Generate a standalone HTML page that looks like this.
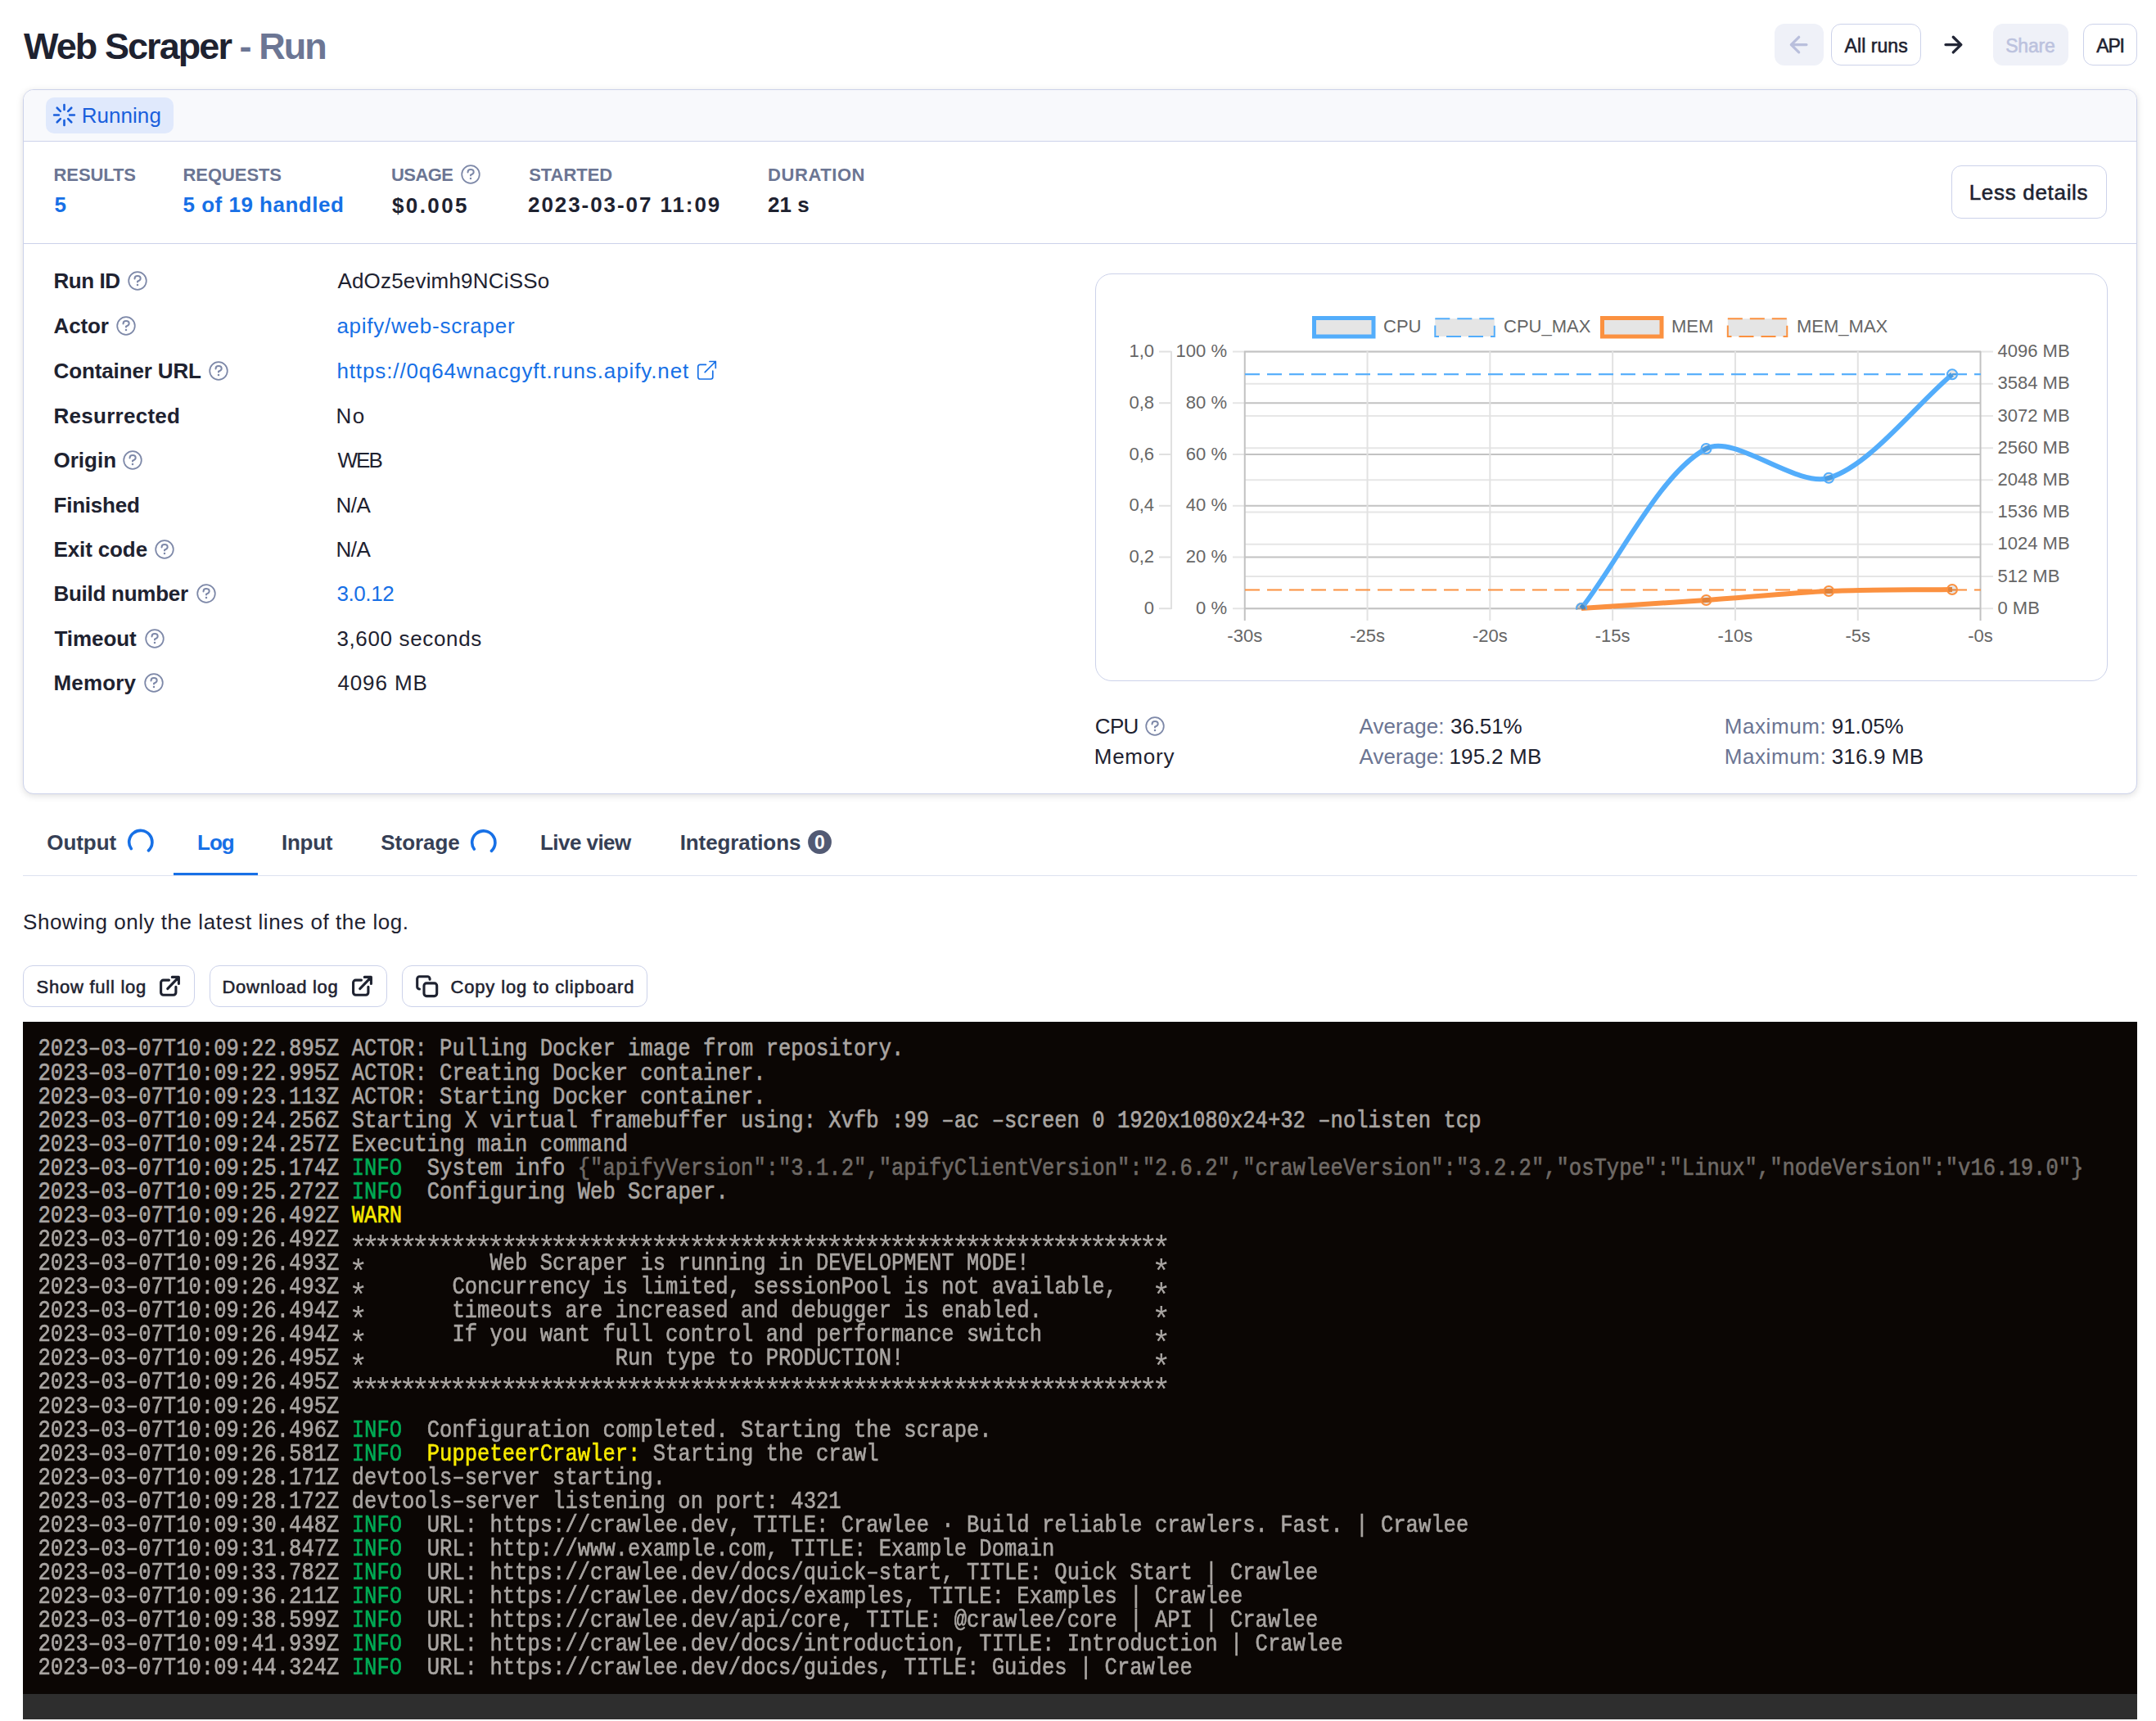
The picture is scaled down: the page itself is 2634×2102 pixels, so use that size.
<!DOCTYPE html><html><head><meta charset="utf-8"><style>html,body{margin:0;padding:0;background:#fff;width:2634px;height:2102px;overflow:hidden;position:relative} .k{display:inline-block;width:15.336px;text-align:center;transform:translateY(11.2px) scale(1.5,1.35);-webkit-text-stroke:0} .lg{-webkit-text-stroke:0.35px currentColor}</style></head><body><div style="position:absolute;left:29px;top:31.27px;font-family:'Liberation Sans', sans-serif;font-size:45px;font-weight:700;color:#1e2230;letter-spacing:-1.938px;line-height:normal;white-space:pre;">Web Scraper <span style="color:#6c7694">- Run</span></div>
<div style="position:absolute;left:2168px;top:29px;width:60px;height:51px;box-sizing:border-box;background:#eff1f8;border-radius:12px"></div>
<svg style="position:absolute;left:0;top:0" width="2634" height="100"><path d="M2207,54.6 H2188.5 M2197.7,45.3 L2188.3,54.6 L2197.7,63.9" fill="none" stroke="#b9bfdc" stroke-width="3.2" stroke-linecap="round" stroke-linejoin="round"/><path d="M2377,54.6 H2395.8 M2386.3,45.3 L2395.8,54.6 L2386.3,63.9" fill="none" stroke="#222636" stroke-width="3.4" stroke-linecap="round" stroke-linejoin="round"/></svg>
<div style="position:absolute;left:2237px;top:29px;width:110px;height:51px;box-sizing:border-box;border:1px solid #ccd2ea;border-radius:12px;background:#fff"></div>
<div style="position:absolute;left:2253.6px;top:43.19px;font-family:'Liberation Sans', sans-serif;font-size:23px;font-weight:400;color:#1e2230;letter-spacing:0.057px;line-height:normal;white-space:pre;-webkit-text-stroke:0.55px currentColor">All runs</div>
<div style="position:absolute;left:2435px;top:29px;width:92px;height:51px;box-sizing:border-box;background:#eff1f8;border-radius:12px"></div>
<div style="position:absolute;left:2450.2px;top:43.19px;font-family:'Liberation Sans', sans-serif;font-size:23px;font-weight:400;color:#bcc2de;letter-spacing:-0.175px;line-height:normal;white-space:pre;-webkit-text-stroke:0.55px currentColor">Share</div>
<div style="position:absolute;left:2545px;top:29px;width:66px;height:51px;box-sizing:border-box;border:1px solid #ccd2ea;border-radius:12px;background:#fff"></div>
<div style="position:absolute;left:2561.2px;top:43.19px;font-family:'Liberation Sans', sans-serif;font-size:23px;font-weight:400;color:#1e2230;letter-spacing:-1.15px;line-height:normal;white-space:pre;-webkit-text-stroke:0.55px currentColor">API</div>
<div style="position:absolute;left:28px;top:109px;width:2583px;height:861px;box-sizing:border-box;border:1px solid #ccd2ea;border-radius:13px;background:#fff;box-shadow:0 2px 8px rgba(0,0,0,0.13)"></div>
<div style="position:absolute;left:29px;top:110px;width:2581px;height:62px;box-sizing:border-box;background:#f8f9fc;border-radius:12px 12px 0 0"></div>
<div style="position:absolute;left:29px;top:172px;width:2581px;height:1px;box-sizing:border-box;background:#ccd2ea"></div>
<div style="position:absolute;left:56px;top:119px;width:156px;height:44px;box-sizing:border-box;background:#e0e9fc;border-radius:10px"></div>
<svg style="position:absolute;left:0;top:0" width="300" height="200"><path d="M85.10,140.50 L90.90,140.50 M83.17,145.17 L87.27,149.27 M78.50,147.10 L78.50,152.90 M73.83,145.17 L69.73,149.27 M71.90,140.50 L66.10,140.50 M73.83,135.83 L69.73,131.73 M78.50,133.90 L78.50,128.10 M83.17,135.83 L87.27,131.73" stroke="#1a5fdc" stroke-width="2.6" stroke-linecap="round"/></svg>
<div style="position:absolute;left:99.7px;top:126.47px;font-family:'Liberation Sans', sans-serif;font-size:26px;font-weight:400;color:#1a5fdc;letter-spacing:0.05px;line-height:normal;white-space:pre;">Running</div>
<div style="position:absolute;left:65.5px;top:201.09px;font-family:'Liberation Sans', sans-serif;font-size:22px;font-weight:700;color:#6b7593;letter-spacing:-0.083px;line-height:normal;white-space:pre;">RESULTS</div>
<div style="position:absolute;left:66.5px;top:235.47px;font-family:'Liberation Sans', sans-serif;font-size:26px;font-weight:700;color:#1770e6;letter-spacing:0px;line-height:normal;white-space:pre;">5</div>
<div style="position:absolute;left:223.5px;top:201.09px;font-family:'Liberation Sans', sans-serif;font-size:22px;font-weight:700;color:#6b7593;letter-spacing:-0.071px;line-height:normal;white-space:pre;">REQUESTS</div>
<div style="position:absolute;left:223.5px;top:235.47px;font-family:'Liberation Sans', sans-serif;font-size:26px;font-weight:700;color:#1770e6;letter-spacing:0.5px;line-height:normal;white-space:pre;">5 of 19 handled</div>
<div style="position:absolute;left:478px;top:201.09px;font-family:'Liberation Sans', sans-serif;font-size:22px;font-weight:700;color:#6b7593;letter-spacing:-0.575px;line-height:normal;white-space:pre;">USAGE</div>
<svg style="position:absolute;left:561.5px;top:199.5px" width="26" height="26" viewBox="-13 -13 26 26"><circle cx="0" cy="0" r="10.8" fill="none" stroke="#7d88a8" stroke-width="1.75"/><path d="M-3.5,-2.6 C-3.5,-4.8 -1.9,-5.9 0,-5.9 C2.1,-5.9 3.7,-4.6 3.7,-2.7 C3.7,-0.9 2.1,-0.1 0,0.7 L0,1.5" fill="none" stroke="#7d88a8" stroke-width="2" stroke-linecap="round" stroke-linejoin="round"/><circle cx="0" cy="5.1" r="1.25" fill="#7d88a8"/></svg>
<div style="position:absolute;left:479px;top:236.47px;font-family:'Liberation Sans', sans-serif;font-size:26px;font-weight:700;color:#1e2230;letter-spacing:2.4px;line-height:normal;white-space:pre;">$0.005</div>
<div style="position:absolute;left:646.2px;top:201.09px;font-family:'Liberation Sans', sans-serif;font-size:22px;font-weight:700;color:#6b7593;letter-spacing:-0.05px;line-height:normal;white-space:pre;">STARTED</div>
<div style="position:absolute;left:645px;top:235.47px;font-family:'Liberation Sans', sans-serif;font-size:26px;font-weight:700;color:#1e2230;letter-spacing:1.933px;line-height:normal;white-space:pre;">2023-03-07 11:09</div>
<div style="position:absolute;left:938px;top:201.09px;font-family:'Liberation Sans', sans-serif;font-size:22px;font-weight:700;color:#6b7593;letter-spacing:0.571px;line-height:normal;white-space:pre;">DURATION</div>
<div style="position:absolute;left:938px;top:235.47px;font-family:'Liberation Sans', sans-serif;font-size:26px;font-weight:700;color:#1e2230;letter-spacing:0.0px;line-height:normal;white-space:pre;">21 s</div>
<div style="position:absolute;left:2384px;top:202px;width:190px;height:65px;box-sizing:border-box;border:1px solid #ccd2ea;border-radius:12px;background:#fff"></div>
<div style="position:absolute;left:2405.7px;top:220.47px;font-family:'Liberation Sans', sans-serif;font-size:26px;font-weight:400;color:#1e2230;letter-spacing:0.691px;line-height:normal;white-space:pre;-webkit-text-stroke:0.55px currentColor">Less details</div>
<div style="position:absolute;left:29px;top:297px;width:2581px;height:1px;box-sizing:border-box;background:#ccd2ea"></div>
<div style="position:absolute;left:65.5px;top:328.47px;font-family:'Liberation Sans', sans-serif;font-size:26px;font-weight:700;color:#1e2230;letter-spacing:-0.45px;line-height:normal;white-space:pre;">Run ID</div>
<svg style="position:absolute;left:154.7px;top:330px" width="26" height="26" viewBox="-13 -13 26 26"><circle cx="0" cy="0" r="10.8" fill="none" stroke="#7d88a8" stroke-width="1.75"/><path d="M-3.5,-2.6 C-3.5,-4.8 -1.9,-5.9 0,-5.9 C2.1,-5.9 3.7,-4.6 3.7,-2.7 C3.7,-0.9 2.1,-0.1 0,0.7 L0,1.5" fill="none" stroke="#7d88a8" stroke-width="2" stroke-linecap="round" stroke-linejoin="round"/><circle cx="0" cy="5.1" r="1.25" fill="#7d88a8"/></svg>
<div style="position:absolute;left:412.4px;top:328.47px;font-family:'Liberation Sans', sans-serif;font-size:26px;font-weight:400;color:#1e2230;letter-spacing:0.188px;line-height:normal;white-space:pre;">AdOz5evimh9NCiSSo</div>
<div style="position:absolute;left:65.5px;top:383.47px;font-family:'Liberation Sans', sans-serif;font-size:26px;font-weight:700;color:#1e2230;letter-spacing:-0.125px;line-height:normal;white-space:pre;">Actor</div>
<svg style="position:absolute;left:140.5px;top:384.5px" width="26" height="26" viewBox="-13 -13 26 26"><circle cx="0" cy="0" r="10.8" fill="none" stroke="#7d88a8" stroke-width="1.75"/><path d="M-3.5,-2.6 C-3.5,-4.8 -1.9,-5.9 0,-5.9 C2.1,-5.9 3.7,-4.6 3.7,-2.7 C3.7,-0.9 2.1,-0.1 0,0.7 L0,1.5" fill="none" stroke="#7d88a8" stroke-width="2" stroke-linecap="round" stroke-linejoin="round"/><circle cx="0" cy="5.1" r="1.25" fill="#7d88a8"/></svg>
<div style="position:absolute;left:411.4px;top:383.47px;font-family:'Liberation Sans', sans-serif;font-size:26px;font-weight:400;color:#1770e6;letter-spacing:0.75px;line-height:normal;white-space:pre;">apify/web-scraper</div>
<div style="position:absolute;left:65.5px;top:438.47px;font-family:'Liberation Sans', sans-serif;font-size:26px;font-weight:700;color:#1e2230;letter-spacing:-0.125px;line-height:normal;white-space:pre;">Container URL</div>
<svg style="position:absolute;left:253.5px;top:439.5px" width="26" height="26" viewBox="-13 -13 26 26"><circle cx="0" cy="0" r="10.8" fill="none" stroke="#7d88a8" stroke-width="1.75"/><path d="M-3.5,-2.6 C-3.5,-4.8 -1.9,-5.9 0,-5.9 C2.1,-5.9 3.7,-4.6 3.7,-2.7 C3.7,-0.9 2.1,-0.1 0,0.7 L0,1.5" fill="none" stroke="#7d88a8" stroke-width="2" stroke-linecap="round" stroke-linejoin="round"/><circle cx="0" cy="5.1" r="1.25" fill="#7d88a8"/></svg>
<div style="position:absolute;left:411.4px;top:438.47px;font-family:'Liberation Sans', sans-serif;font-size:26px;font-weight:400;color:#1770e6;letter-spacing:0.882px;line-height:normal;white-space:pre;">https://0q64wnacgyft.runs.apify.net</div>
<div style="position:absolute;left:65.5px;top:492.97px;font-family:'Liberation Sans', sans-serif;font-size:26px;font-weight:700;color:#1e2230;letter-spacing:0.275px;line-height:normal;white-space:pre;">Resurrected</div>
<div style="position:absolute;left:410.4px;top:492.97px;font-family:'Liberation Sans', sans-serif;font-size:26px;font-weight:400;color:#1e2230;letter-spacing:1.5px;line-height:normal;white-space:pre;">No</div>
<div style="position:absolute;left:65.5px;top:547.47px;font-family:'Liberation Sans', sans-serif;font-size:26px;font-weight:700;color:#1e2230;letter-spacing:0.0px;line-height:normal;white-space:pre;">Origin</div>
<svg style="position:absolute;left:148.5px;top:548.5px" width="26" height="26" viewBox="-13 -13 26 26"><circle cx="0" cy="0" r="10.8" fill="none" stroke="#7d88a8" stroke-width="1.75"/><path d="M-3.5,-2.6 C-3.5,-4.8 -1.9,-5.9 0,-5.9 C2.1,-5.9 3.7,-4.6 3.7,-2.7 C3.7,-0.9 2.1,-0.1 0,0.7 L0,1.5" fill="none" stroke="#7d88a8" stroke-width="2" stroke-linecap="round" stroke-linejoin="round"/><circle cx="0" cy="5.1" r="1.25" fill="#7d88a8"/></svg>
<div style="position:absolute;left:412.4px;top:547.47px;font-family:'Liberation Sans', sans-serif;font-size:26px;font-weight:400;color:#1e2230;letter-spacing:-1.875px;line-height:normal;white-space:pre;">WEB</div>
<div style="position:absolute;left:65.5px;top:601.97px;font-family:'Liberation Sans', sans-serif;font-size:26px;font-weight:700;color:#1e2230;letter-spacing:-0.214px;line-height:normal;white-space:pre;">Finished</div>
<div style="position:absolute;left:410.4px;top:601.97px;font-family:'Liberation Sans', sans-serif;font-size:26px;font-weight:400;color:#1e2230;letter-spacing:-0.5px;line-height:normal;white-space:pre;">N/A</div>
<div style="position:absolute;left:65.5px;top:655.97px;font-family:'Liberation Sans', sans-serif;font-size:26px;font-weight:700;color:#1e2230;letter-spacing:-0.125px;line-height:normal;white-space:pre;">Exit code</div>
<svg style="position:absolute;left:187.75px;top:657.5px" width="26" height="26" viewBox="-13 -13 26 26"><circle cx="0" cy="0" r="10.8" fill="none" stroke="#7d88a8" stroke-width="1.75"/><path d="M-3.5,-2.6 C-3.5,-4.8 -1.9,-5.9 0,-5.9 C2.1,-5.9 3.7,-4.6 3.7,-2.7 C3.7,-0.9 2.1,-0.1 0,0.7 L0,1.5" fill="none" stroke="#7d88a8" stroke-width="2" stroke-linecap="round" stroke-linejoin="round"/><circle cx="0" cy="5.1" r="1.25" fill="#7d88a8"/></svg>
<div style="position:absolute;left:410.4px;top:655.97px;font-family:'Liberation Sans', sans-serif;font-size:26px;font-weight:400;color:#1e2230;letter-spacing:-0.5px;line-height:normal;white-space:pre;">N/A</div>
<div style="position:absolute;left:65.5px;top:710.47px;font-family:'Liberation Sans', sans-serif;font-size:26px;font-weight:700;color:#1e2230;letter-spacing:-0.273px;line-height:normal;white-space:pre;">Build number</div>
<svg style="position:absolute;left:238.75px;top:712px" width="26" height="26" viewBox="-13 -13 26 26"><circle cx="0" cy="0" r="10.8" fill="none" stroke="#7d88a8" stroke-width="1.75"/><path d="M-3.5,-2.6 C-3.5,-4.8 -1.9,-5.9 0,-5.9 C2.1,-5.9 3.7,-4.6 3.7,-2.7 C3.7,-0.9 2.1,-0.1 0,0.7 L0,1.5" fill="none" stroke="#7d88a8" stroke-width="2" stroke-linecap="round" stroke-linejoin="round"/><circle cx="0" cy="5.1" r="1.25" fill="#7d88a8"/></svg>
<div style="position:absolute;left:411.4px;top:710.47px;font-family:'Liberation Sans', sans-serif;font-size:26px;font-weight:400;color:#1770e6;letter-spacing:-0.4px;line-height:normal;white-space:pre;">3.0.12</div>
<div style="position:absolute;left:66.5px;top:765.22px;font-family:'Liberation Sans', sans-serif;font-size:26px;font-weight:700;color:#1e2230;letter-spacing:-0.083px;line-height:normal;white-space:pre;">Timeout</div>
<svg style="position:absolute;left:175.75px;top:766.5px" width="26" height="26" viewBox="-13 -13 26 26"><circle cx="0" cy="0" r="10.8" fill="none" stroke="#7d88a8" stroke-width="1.75"/><path d="M-3.5,-2.6 C-3.5,-4.8 -1.9,-5.9 0,-5.9 C2.1,-5.9 3.7,-4.6 3.7,-2.7 C3.7,-0.9 2.1,-0.1 0,0.7 L0,1.5" fill="none" stroke="#7d88a8" stroke-width="2" stroke-linecap="round" stroke-linejoin="round"/><circle cx="0" cy="5.1" r="1.25" fill="#7d88a8"/></svg>
<div style="position:absolute;left:411.4px;top:765.22px;font-family:'Liberation Sans', sans-serif;font-size:26px;font-weight:400;color:#1e2230;letter-spacing:0.65px;line-height:normal;white-space:pre;">3,600 seconds</div>
<div style="position:absolute;left:65.5px;top:819.47px;font-family:'Liberation Sans', sans-serif;font-size:26px;font-weight:700;color:#1e2230;letter-spacing:0.15px;line-height:normal;white-space:pre;">Memory</div>
<svg style="position:absolute;left:174.5px;top:821px" width="26" height="26" viewBox="-13 -13 26 26"><circle cx="0" cy="0" r="10.8" fill="none" stroke="#7d88a8" stroke-width="1.75"/><path d="M-3.5,-2.6 C-3.5,-4.8 -1.9,-5.9 0,-5.9 C2.1,-5.9 3.7,-4.6 3.7,-2.7 C3.7,-0.9 2.1,-0.1 0,0.7 L0,1.5" fill="none" stroke="#7d88a8" stroke-width="2" stroke-linecap="round" stroke-linejoin="round"/><circle cx="0" cy="5.1" r="1.25" fill="#7d88a8"/></svg>
<div style="position:absolute;left:412.4px;top:819.47px;font-family:'Liberation Sans', sans-serif;font-size:26px;font-weight:400;color:#1e2230;letter-spacing:0.9px;line-height:normal;white-space:pre;">4096 MB</div>
<svg style="position:absolute;left:0;top:0" width="900" height="500"><path d="M862.4,445.4 H855.2 a2.4,2.4 0 0 0 -2.4,2.4 V460.6 a2.4,2.4 0 0 0 2.4,2.4 H868.4 a2.4,2.4 0 0 0 2.4,-2.4 V453.2 M861.2,454.7 L874.3,441.5 M867,441.5 H874.3 V449.5" fill="none" stroke="#1770e6" stroke-width="1.7" stroke-linecap="round" stroke-linejoin="round"/></svg>
<div style="position:absolute;left:1338px;top:334px;width:1237px;height:498px;box-sizing:border-box;border:1px solid #ccd2ea;border-radius:20px;background:#fff"></div>
<svg style="position:absolute;left:0;top:0" width="2634" height="900" viewBox="0 0 2634 900"><line x1="1520" y1="743.25" x2="2435" y2="743.25" stroke="#e6e6e6" stroke-width="2"/><line x1="1520" y1="704.03" x2="2435" y2="704.03" stroke="#e6e6e6" stroke-width="2"/><line x1="1520" y1="664.81" x2="2435" y2="664.81" stroke="#e6e6e6" stroke-width="2"/><line x1="1520" y1="625.59" x2="2435" y2="625.59" stroke="#e6e6e6" stroke-width="2"/><line x1="1520" y1="586.37" x2="2435" y2="586.37" stroke="#e6e6e6" stroke-width="2"/><line x1="1520" y1="547.15" x2="2435" y2="547.15" stroke="#e6e6e6" stroke-width="2"/><line x1="1520" y1="507.93" x2="2435" y2="507.93" stroke="#e6e6e6" stroke-width="2"/><line x1="1520" y1="468.71" x2="2435" y2="468.71" stroke="#e6e6e6" stroke-width="2"/><line x1="1520" y1="429.49" x2="2435" y2="429.49" stroke="#e6e6e6" stroke-width="2"/><line x1="1506" y1="743.25" x2="1520" y2="743.25" stroke="#e4e4e4" stroke-width="2"/><line x1="1520" y1="743.25" x2="2420" y2="743.25" stroke="#c2c2c2" stroke-width="2"/><line x1="1506" y1="680.50" x2="1520" y2="680.50" stroke="#e4e4e4" stroke-width="2"/><line x1="1520" y1="680.50" x2="2420" y2="680.50" stroke="#c2c2c2" stroke-width="2"/><line x1="1506" y1="617.75" x2="1520" y2="617.75" stroke="#e4e4e4" stroke-width="2"/><line x1="1520" y1="617.75" x2="2420" y2="617.75" stroke="#c2c2c2" stroke-width="2"/><line x1="1506" y1="555.00" x2="1520" y2="555.00" stroke="#e4e4e4" stroke-width="2"/><line x1="1520" y1="555.00" x2="2420" y2="555.00" stroke="#c2c2c2" stroke-width="2"/><line x1="1506" y1="492.25" x2="1520" y2="492.25" stroke="#e4e4e4" stroke-width="2"/><line x1="1520" y1="492.25" x2="2420" y2="492.25" stroke="#c2c2c2" stroke-width="2"/><line x1="1506" y1="429.50" x2="1520" y2="429.50" stroke="#e4e4e4" stroke-width="2"/><line x1="1520" y1="429.50" x2="2420" y2="429.50" stroke="#c2c2c2" stroke-width="2"/><line x1="1416" y1="743.25" x2="1431" y2="743.25" stroke="#e0e0e0" stroke-width="2"/><line x1="1416" y1="680.50" x2="1431" y2="680.50" stroke="#e0e0e0" stroke-width="2"/><line x1="1416" y1="617.75" x2="1431" y2="617.75" stroke="#e0e0e0" stroke-width="2"/><line x1="1416" y1="555.00" x2="1431" y2="555.00" stroke="#e0e0e0" stroke-width="2"/><line x1="1416" y1="492.25" x2="1431" y2="492.25" stroke="#e0e0e0" stroke-width="2"/><line x1="1416" y1="429.50" x2="1431" y2="429.50" stroke="#e0e0e0" stroke-width="2"/><line x1="1431" y1="429" x2="1431" y2="744" stroke="#e0e0e0" stroke-width="2"/><line x1="1520.75" y1="429" x2="1520.75" y2="758" stroke="#c2c2c2" stroke-width="2"/><line x1="1670.55" y1="429" x2="1670.55" y2="758" stroke="#e2e2e2" stroke-width="2"/><line x1="1820.35" y1="429" x2="1820.35" y2="758" stroke="#e2e2e2" stroke-width="2"/><line x1="1970.15" y1="429" x2="1970.15" y2="758" stroke="#e2e2e2" stroke-width="2"/><line x1="2119.95" y1="429" x2="2119.95" y2="758" stroke="#e2e2e2" stroke-width="2"/><line x1="2269.75" y1="429" x2="2269.75" y2="758" stroke="#e2e2e2" stroke-width="2"/><line x1="2419.55" y1="429" x2="2419.55" y2="758" stroke="#c2c2c2" stroke-width="2"/><line x1="1521" y1="457.2" x2="2420" y2="457.2" stroke="#5ab0fb" stroke-width="2.2" stroke-dasharray="18 9"/><line x1="1521" y1="720.5" x2="2420" y2="720.5" stroke="#fb9140" stroke-width="2.2" stroke-dasharray="18 9"/><path d="M1932.0,743.0 C1977.8,740.0 2038.8,736.2 2084.5,733.0 C2129.4,729.9 2189.3,723.9 2234.2,722.0 C2279.4,720.0 2339.8,720.6 2385.0,720.0" fill="none" stroke="#fb9140" stroke-width="6"/><path d="M1932.0,743.0 C1977.8,684.5 2028.6,577.5 2084.5,548.0 C2119.3,529.7 2194.7,595.7 2234.2,583.8 C2284.8,568.5 2339.8,495.2 2385.0,457.2" fill="none" stroke="#53adfb" stroke-width="6"/><clipPath id="ca"><rect x="1520" y="420" width="905" height="324.5"/></clipPath><g clip-path="url(#ca)"><circle cx="1932" cy="743" r="6" fill="rgba(0,0,0,0.1)" stroke="#fb9140" stroke-width="2"/><circle cx="2084.5" cy="733" r="6" fill="rgba(0,0,0,0.1)" stroke="#fb9140" stroke-width="2"/><circle cx="2234.25" cy="722" r="6" fill="rgba(0,0,0,0.1)" stroke="#fb9140" stroke-width="2"/><circle cx="2385" cy="720" r="6" fill="rgba(0,0,0,0.1)" stroke="#fb9140" stroke-width="2"/><circle cx="1932" cy="743" r="6" fill="rgba(0,0,0,0.1)" stroke="#53adfb" stroke-width="2"/><circle cx="2084.5" cy="548" r="6" fill="rgba(0,0,0,0.1)" stroke="#53adfb" stroke-width="2"/><circle cx="2234.25" cy="583.75" r="6" fill="rgba(0,0,0,0.1)" stroke="#53adfb" stroke-width="2"/><circle cx="2385" cy="457.2" r="6" fill="rgba(0,0,0,0.1)" stroke="#53adfb" stroke-width="2"/></g><rect x="1605.5" y="388.5" width="72.5" height="22.5" fill="#e5e5e5" stroke="#53adfb" stroke-width="5"/><rect x="1753.3" y="389.2" width="72.5" height="21.7" fill="#e5e5e5" stroke="#53adfb" stroke-width="2" stroke-dasharray="18 9"/><rect x="1957.5" y="388.5" width="72.5" height="22.5" fill="#e5e5e5" stroke="#fb9140" stroke-width="5"/><rect x="2110.8" y="389.2" width="72.5" height="21.7" fill="#e5e5e5" stroke="#fb9140" stroke-width="2" stroke-dasharray="18 9"/></svg>
<div style="position:absolute;left:1690px;top:386.09px;font-family:'Liberation Sans', sans-serif;font-size:22px;font-weight:400;color:#666666;letter-spacing:0px;line-height:normal;white-space:pre;">CPU</div>
<div style="position:absolute;left:1837px;top:386.09px;font-family:'Liberation Sans', sans-serif;font-size:22px;font-weight:400;color:#666666;letter-spacing:0px;line-height:normal;white-space:pre;">CPU_MAX</div>
<div style="position:absolute;left:2042px;top:386.09px;font-family:'Liberation Sans', sans-serif;font-size:22px;font-weight:400;color:#666666;letter-spacing:0px;line-height:normal;white-space:pre;">MEM</div>
<div style="position:absolute;left:2195px;top:386.09px;font-family:'Liberation Sans', sans-serif;font-size:22px;font-weight:400;color:#666666;letter-spacing:0px;line-height:normal;white-space:pre;">MEM_MAX</div>
<div style="position:absolute;left:1300px;width:110px;top:729.84px;text-align:right;font-family:'Liberation Sans', sans-serif;font-size:22px;color:#666666;line-height:normal">0</div>
<div style="position:absolute;left:1389px;width:110px;top:729.84px;text-align:right;font-family:'Liberation Sans', sans-serif;font-size:22px;color:#666666;line-height:normal">0 %</div>
<div style="position:absolute;left:1300px;width:110px;top:667.09px;text-align:right;font-family:'Liberation Sans', sans-serif;font-size:22px;color:#666666;line-height:normal">0,2</div>
<div style="position:absolute;left:1389px;width:110px;top:667.09px;text-align:right;font-family:'Liberation Sans', sans-serif;font-size:22px;color:#666666;line-height:normal">20 %</div>
<div style="position:absolute;left:1300px;width:110px;top:604.34px;text-align:right;font-family:'Liberation Sans', sans-serif;font-size:22px;color:#666666;line-height:normal">0,4</div>
<div style="position:absolute;left:1389px;width:110px;top:604.34px;text-align:right;font-family:'Liberation Sans', sans-serif;font-size:22px;color:#666666;line-height:normal">40 %</div>
<div style="position:absolute;left:1300px;width:110px;top:541.59px;text-align:right;font-family:'Liberation Sans', sans-serif;font-size:22px;color:#666666;line-height:normal">0,6</div>
<div style="position:absolute;left:1389px;width:110px;top:541.59px;text-align:right;font-family:'Liberation Sans', sans-serif;font-size:22px;color:#666666;line-height:normal">60 %</div>
<div style="position:absolute;left:1300px;width:110px;top:478.84px;text-align:right;font-family:'Liberation Sans', sans-serif;font-size:22px;color:#666666;line-height:normal">0,8</div>
<div style="position:absolute;left:1389px;width:110px;top:478.84px;text-align:right;font-family:'Liberation Sans', sans-serif;font-size:22px;color:#666666;line-height:normal">80 %</div>
<div style="position:absolute;left:1300px;width:110px;top:416.09px;text-align:right;font-family:'Liberation Sans', sans-serif;font-size:22px;color:#666666;line-height:normal">1,0</div>
<div style="position:absolute;left:1389px;width:110px;top:416.09px;text-align:right;font-family:'Liberation Sans', sans-serif;font-size:22px;color:#666666;line-height:normal">100 %</div>
<div style="position:absolute;left:2440.5px;top:729.84px;font-family:'Liberation Sans', sans-serif;font-size:22px;font-weight:400;color:#666666;letter-spacing:0px;line-height:normal;white-space:pre;">0 MB</div>
<div style="position:absolute;left:2440.5px;top:690.62px;font-family:'Liberation Sans', sans-serif;font-size:22px;font-weight:400;color:#666666;letter-spacing:0px;line-height:normal;white-space:pre;">512 MB</div>
<div style="position:absolute;left:2440.5px;top:651.40px;font-family:'Liberation Sans', sans-serif;font-size:22px;font-weight:400;color:#666666;letter-spacing:0px;line-height:normal;white-space:pre;">1024 MB</div>
<div style="position:absolute;left:2440.5px;top:612.18px;font-family:'Liberation Sans', sans-serif;font-size:22px;font-weight:400;color:#666666;letter-spacing:0px;line-height:normal;white-space:pre;">1536 MB</div>
<div style="position:absolute;left:2440.5px;top:572.96px;font-family:'Liberation Sans', sans-serif;font-size:22px;font-weight:400;color:#666666;letter-spacing:0px;line-height:normal;white-space:pre;">2048 MB</div>
<div style="position:absolute;left:2440.5px;top:533.74px;font-family:'Liberation Sans', sans-serif;font-size:22px;font-weight:400;color:#666666;letter-spacing:0px;line-height:normal;white-space:pre;">2560 MB</div>
<div style="position:absolute;left:2440.5px;top:494.52px;font-family:'Liberation Sans', sans-serif;font-size:22px;font-weight:400;color:#666666;letter-spacing:0px;line-height:normal;white-space:pre;">3072 MB</div>
<div style="position:absolute;left:2440.5px;top:455.30px;font-family:'Liberation Sans', sans-serif;font-size:22px;font-weight:400;color:#666666;letter-spacing:0px;line-height:normal;white-space:pre;">3584 MB</div>
<div style="position:absolute;left:2440.5px;top:416.08px;font-family:'Liberation Sans', sans-serif;font-size:22px;font-weight:400;color:#666666;letter-spacing:0px;line-height:normal;white-space:pre;">4096 MB</div>
<div style="position:absolute;left:1460.75px;width:120px;top:763.84px;text-align:center;font-family:'Liberation Sans', sans-serif;font-size:22px;color:#666666;line-height:normal">-30s</div>
<div style="position:absolute;left:1610.55px;width:120px;top:763.84px;text-align:center;font-family:'Liberation Sans', sans-serif;font-size:22px;color:#666666;line-height:normal">-25s</div>
<div style="position:absolute;left:1760.35px;width:120px;top:763.84px;text-align:center;font-family:'Liberation Sans', sans-serif;font-size:22px;color:#666666;line-height:normal">-20s</div>
<div style="position:absolute;left:1910.15px;width:120px;top:763.84px;text-align:center;font-family:'Liberation Sans', sans-serif;font-size:22px;color:#666666;line-height:normal">-15s</div>
<div style="position:absolute;left:2059.95px;width:120px;top:763.84px;text-align:center;font-family:'Liberation Sans', sans-serif;font-size:22px;color:#666666;line-height:normal">-10s</div>
<div style="position:absolute;left:2209.75px;width:120px;top:763.84px;text-align:center;font-family:'Liberation Sans', sans-serif;font-size:22px;color:#666666;line-height:normal">-5s</div>
<div style="position:absolute;left:2359.55px;width:120px;top:763.84px;text-align:center;font-family:'Liberation Sans', sans-serif;font-size:22px;color:#666666;line-height:normal">-0s</div>
<div style="position:absolute;left:1337.75px;top:871.97px;font-family:'Liberation Sans', sans-serif;font-size:26px;font-weight:400;color:#1e2230;letter-spacing:-0.625px;line-height:normal;white-space:pre;">CPU</div>
<svg style="position:absolute;left:1397.5px;top:873.5px" width="26" height="26" viewBox="-13 -13 26 26"><circle cx="0" cy="0" r="10.8" fill="none" stroke="#7d88a8" stroke-width="1.75"/><path d="M-3.5,-2.6 C-3.5,-4.8 -1.9,-5.9 0,-5.9 C2.1,-5.9 3.7,-4.6 3.7,-2.7 C3.7,-0.9 2.1,-0.1 0,0.7 L0,1.5" fill="none" stroke="#7d88a8" stroke-width="2" stroke-linecap="round" stroke-linejoin="round"/><circle cx="0" cy="5.1" r="1.25" fill="#7d88a8"/></svg>
<div style="position:absolute;left:1336.75px;top:909.47px;font-family:'Liberation Sans', sans-serif;font-size:26px;font-weight:400;color:#1e2230;letter-spacing:0.75px;line-height:normal;white-space:pre;">Memory</div>
<div style="position:absolute;left:1660.5px;top:871.97px;font-family:'Liberation Sans', sans-serif;font-size:26px;font-weight:400;color:#6b7593;letter-spacing:0.071px;line-height:normal;white-space:pre;">Average:</div>
<div style="position:absolute;left:1772.1px;top:871.97px;font-family:'Liberation Sans', sans-serif;font-size:26px;font-weight:400;color:#1e2230;letter-spacing:-0.14px;line-height:normal;white-space:pre;">36.51%</div>
<div style="position:absolute;left:1660.5px;top:909.47px;font-family:'Liberation Sans', sans-serif;font-size:26px;font-weight:400;color:#6b7593;letter-spacing:0.071px;line-height:normal;white-space:pre;">Average:</div>
<div style="position:absolute;left:1770.4px;top:909.47px;font-family:'Liberation Sans', sans-serif;font-size:26px;font-weight:400;color:#1e2230;letter-spacing:0.229px;line-height:normal;white-space:pre;">195.2 MB</div>
<div style="position:absolute;left:2106.75px;top:871.97px;font-family:'Liberation Sans', sans-serif;font-size:26px;font-weight:400;color:#6b7593;letter-spacing:0.571px;line-height:normal;white-space:pre;">Maximum:</div>
<div style="position:absolute;left:2237.75px;top:871.97px;font-family:'Liberation Sans', sans-serif;font-size:26px;font-weight:400;color:#1e2230;letter-spacing:-0.05px;line-height:normal;white-space:pre;">91.05%</div>
<div style="position:absolute;left:2106.75px;top:909.47px;font-family:'Liberation Sans', sans-serif;font-size:26px;font-weight:400;color:#6b7593;letter-spacing:0.571px;line-height:normal;white-space:pre;">Maximum:</div>
<div style="position:absolute;left:2237.75px;top:909.47px;font-family:'Liberation Sans', sans-serif;font-size:26px;font-weight:400;color:#1e2230;letter-spacing:0.143px;line-height:normal;white-space:pre;">316.9 MB</div>
<div style="position:absolute;left:57.25px;top:1014.47px;font-family:'Liberation Sans', sans-serif;font-size:26px;font-weight:700;color:#363f55;letter-spacing:-0.05px;line-height:normal;white-space:pre;">Output</div>
<div style="position:absolute;left:241px;top:1014.47px;font-family:'Liberation Sans', sans-serif;font-size:26px;font-weight:700;color:#1770e6;letter-spacing:-1.0px;line-height:normal;white-space:pre;">Log</div>
<div style="position:absolute;left:344px;top:1014.47px;font-family:'Liberation Sans', sans-serif;font-size:26px;font-weight:700;color:#363f55;letter-spacing:-0.25px;line-height:normal;white-space:pre;">Input</div>
<div style="position:absolute;left:465.3px;top:1014.47px;font-family:'Liberation Sans', sans-serif;font-size:26px;font-weight:700;color:#363f55;letter-spacing:-0.05px;line-height:normal;white-space:pre;">Storage</div>
<div style="position:absolute;left:660px;top:1014.47px;font-family:'Liberation Sans', sans-serif;font-size:26px;font-weight:700;color:#363f55;letter-spacing:-0.55px;line-height:normal;white-space:pre;">Live view</div>
<div style="position:absolute;left:830.7px;top:1014.47px;font-family:'Liberation Sans', sans-serif;font-size:26px;font-weight:700;color:#363f55;letter-spacing:-0.1px;line-height:normal;white-space:pre;">Integrations</div>
<svg style="position:absolute;left:0;top:0" width="1100" height="1100"><path d="M160.25,1036.59 A14.1,14.1 0 1 1 181.42,1038.81" fill="none" stroke="#1770e6" stroke-width="3.6" stroke-linecap="round"/><path d="M579.25,1037.09 A14.1,14.1 0 1 1 600.42,1039.31" fill="none" stroke="#1770e6" stroke-width="3.6" stroke-linecap="round"/><circle cx="1001.5" cy="1028.5" r="14.4" fill="#525a74"/></svg>
<div style="position:absolute;left:987px;top:1016.18px;width:29px;text-align:center;font-family:'Liberation Sans', sans-serif;font-size:23px;font-weight:700;color:#fff;line-height:normal">0</div>
<div style="position:absolute;left:28px;top:1069px;width:2583px;height:1px;box-sizing:border-box;background:#dde1f0"></div>
<div style="position:absolute;left:212px;top:1066px;width:103px;height:3px;box-sizing:border-box;background:#1770e6"></div>
<div style="position:absolute;left:28px;top:1110.97px;font-family:'Liberation Sans', sans-serif;font-size:26px;font-weight:400;color:#1e2230;letter-spacing:0.537px;line-height:normal;white-space:pre;">Showing only the latest lines of the log.</div>
<div style="position:absolute;left:28px;top:1179px;width:210px;height:51px;box-sizing:border-box;border:1px solid #ccd2ea;border-radius:12px;background:#fff"></div>
<div style="position:absolute;left:44.5px;top:1192.59px;font-family:'Liberation Sans', sans-serif;font-size:22px;font-weight:400;color:#1e2230;letter-spacing:0.75px;line-height:normal;white-space:pre;-webkit-text-stroke:0.55px currentColor">Show full log</div>
<div style="position:absolute;left:256px;top:1179px;width:217px;height:51px;box-sizing:border-box;border:1px solid #ccd2ea;border-radius:12px;background:#fff"></div>
<div style="position:absolute;left:271.5px;top:1192.59px;font-family:'Liberation Sans', sans-serif;font-size:22px;font-weight:400;color:#1e2230;letter-spacing:0.727px;line-height:normal;white-space:pre;-webkit-text-stroke:0.55px currentColor">Download log</div>
<div style="position:absolute;left:491px;top:1179px;width:300px;height:51px;box-sizing:border-box;border:1px solid #ccd2ea;border-radius:12px;background:#fff"></div>
<div style="position:absolute;left:550.4px;top:1192.59px;font-family:'Liberation Sans', sans-serif;font-size:22px;font-weight:400;color:#1e2230;letter-spacing:0.87px;line-height:normal;white-space:pre;-webkit-text-stroke:0.55px currentColor">Copy log to clipboard</div>
<svg style="position:absolute;left:0;top:0" width="900" height="1300"><path d="M206.5,1197.1 H199.6 a3,3 0 0 0 -3,3 V1212.3 a3,3 0 0 0 3,3 H211.9 a3,3 0 0 0 3,-3 V1205.3 M204.75,1207.6 L218.2,1193.6 M210.3,1193.4 H218.4 V1201.5" fill="none" stroke="#1e2230" stroke-width="3.1" stroke-linecap="round" stroke-linejoin="round"/><path transform="translate(235,0)" d="M206.5,1197.1 H199.6 a3,3 0 0 0 -3,3 V1212.3 a3,3 0 0 0 3,3 H211.9 a3,3 0 0 0 3,-3 V1205.3 M204.75,1207.6 L218.2,1193.6 M210.3,1193.4 H218.4 V1201.5" fill="none" stroke="#1e2230" stroke-width="3.1" stroke-linecap="round" stroke-linejoin="round"/><path d="M525.1,1196.2 V1195.5 a2.8,2.8 0 0 0 -2.8,-2.8 H512.5 a2.8,2.8 0 0 0 -2.8,2.8 V1205.2 a2.8,2.8 0 0 0 2.8,2.8 M521,1200.9 H530.7 a3,3 0 0 1 3,3 V1213.6 a3,3 0 0 1 -3,3 H521 a3,3 0 0 1 -3,-3 V1203.9 a3,3 0 0 1 3,-3 Z" fill="none" stroke="#1e2230" stroke-width="3.1" stroke-linecap="round" stroke-linejoin="round"/></svg>
<div style="position:absolute;left:28px;top:1248px;width:2583px;height:821px;box-sizing:border-box;background:#0b0604"></div>
<div style="position:absolute;left:28px;top:2069px;width:2583px;height:31px;box-sizing:border-box;background:#2e2e2e"></div>
<div style="position:absolute;left:46.5px;top:1268.46px;font-family:'Liberation Mono', monospace;font-size:25.56px;font-weight:400;color:#a9a5a2;letter-spacing:0px;line-height:normal;white-space:pre;-webkit-text-stroke:0.55px;transform:scaleY(1.16);transform-origin:0 21.3px">2023–03–07T10:09:22.895Z ACTOR: Pulling Docker image from repository.</div>
<div style="position:absolute;left:46.5px;top:1297.53px;font-family:'Liberation Mono', monospace;font-size:25.56px;font-weight:400;color:#a9a5a2;letter-spacing:0px;line-height:normal;white-space:pre;-webkit-text-stroke:0.55px;transform:scaleY(1.16);transform-origin:0 21.3px">2023–03–07T10:09:22.995Z ACTOR: Creating Docker container.</div>
<div style="position:absolute;left:46.5px;top:1326.60px;font-family:'Liberation Mono', monospace;font-size:25.56px;font-weight:400;color:#a9a5a2;letter-spacing:0px;line-height:normal;white-space:pre;-webkit-text-stroke:0.55px;transform:scaleY(1.16);transform-origin:0 21.3px">2023–03–07T10:09:23.113Z ACTOR: Starting Docker container.</div>
<div style="position:absolute;left:46.5px;top:1355.67px;font-family:'Liberation Mono', monospace;font-size:25.56px;font-weight:400;color:#a9a5a2;letter-spacing:0px;line-height:normal;white-space:pre;-webkit-text-stroke:0.55px;transform:scaleY(1.16);transform-origin:0 21.3px">2023–03–07T10:09:24.256Z Starting X virtual framebuffer using: Xvfb :99 –ac –screen 0 1920x1080x24+32 –nolisten tcp</div>
<div style="position:absolute;left:46.5px;top:1384.74px;font-family:'Liberation Mono', monospace;font-size:25.56px;font-weight:400;color:#a9a5a2;letter-spacing:0px;line-height:normal;white-space:pre;-webkit-text-stroke:0.55px;transform:scaleY(1.16);transform-origin:0 21.3px">2023–03–07T10:09:24.257Z Executing main command</div>
<div style="position:absolute;left:46.5px;top:1413.81px;font-family:'Liberation Mono', monospace;font-size:25.56px;font-weight:400;color:#a9a5a2;letter-spacing:0px;line-height:normal;white-space:pre;-webkit-text-stroke:0.55px;transform:scaleY(1.16);transform-origin:0 21.3px">2023–03–07T10:09:25.174Z <span style="color:#00ab55">INFO</span>  System info <span style="color:#6f6a66">{&quot;apifyVersion&quot;:&quot;3.1.2&quot;,&quot;apifyClientVersion&quot;:&quot;2.6.2&quot;,&quot;crawleeVersion&quot;:&quot;3.2.2&quot;,&quot;osType&quot;:&quot;Linux&quot;,&quot;nodeVersion&quot;:&quot;v16.19.0&quot;}</span></div>
<div style="position:absolute;left:46.5px;top:1442.88px;font-family:'Liberation Mono', monospace;font-size:25.56px;font-weight:400;color:#a9a5a2;letter-spacing:0px;line-height:normal;white-space:pre;-webkit-text-stroke:0.55px;transform:scaleY(1.16);transform-origin:0 21.3px">2023–03–07T10:09:25.272Z <span style="color:#00ab55">INFO</span>  Configuring Web Scraper.</div>
<div style="position:absolute;left:46.5px;top:1471.95px;font-family:'Liberation Mono', monospace;font-size:25.56px;font-weight:400;color:#a9a5a2;letter-spacing:0px;line-height:normal;white-space:pre;-webkit-text-stroke:0.55px;transform:scaleY(1.16);transform-origin:0 21.3px">2023–03–07T10:09:26.492Z <span style="color:#f7ea00">WARN</span></div>
<div style="position:absolute;left:46.5px;top:1501.02px;font-family:'Liberation Mono', monospace;font-size:25.56px;font-weight:400;color:#a9a5a2;letter-spacing:0px;line-height:normal;white-space:pre;-webkit-text-stroke:0.55px;transform:scaleY(1.16);transform-origin:0 21.3px">2023–03–07T10:09:26.492Z <span class="k">*</span><span class="k">*</span><span class="k">*</span><span class="k">*</span><span class="k">*</span><span class="k">*</span><span class="k">*</span><span class="k">*</span><span class="k">*</span><span class="k">*</span><span class="k">*</span><span class="k">*</span><span class="k">*</span><span class="k">*</span><span class="k">*</span><span class="k">*</span><span class="k">*</span><span class="k">*</span><span class="k">*</span><span class="k">*</span><span class="k">*</span><span class="k">*</span><span class="k">*</span><span class="k">*</span><span class="k">*</span><span class="k">*</span><span class="k">*</span><span class="k">*</span><span class="k">*</span><span class="k">*</span><span class="k">*</span><span class="k">*</span><span class="k">*</span><span class="k">*</span><span class="k">*</span><span class="k">*</span><span class="k">*</span><span class="k">*</span><span class="k">*</span><span class="k">*</span><span class="k">*</span><span class="k">*</span><span class="k">*</span><span class="k">*</span><span class="k">*</span><span class="k">*</span><span class="k">*</span><span class="k">*</span><span class="k">*</span><span class="k">*</span><span class="k">*</span><span class="k">*</span><span class="k">*</span><span class="k">*</span><span class="k">*</span><span class="k">*</span><span class="k">*</span><span class="k">*</span><span class="k">*</span><span class="k">*</span><span class="k">*</span><span class="k">*</span><span class="k">*</span><span class="k">*</span><span class="k">*</span></div>
<div style="position:absolute;left:46.5px;top:1530.09px;font-family:'Liberation Mono', monospace;font-size:25.56px;font-weight:400;color:#a9a5a2;letter-spacing:0px;line-height:normal;white-space:pre;-webkit-text-stroke:0.55px;transform:scaleY(1.16);transform-origin:0 21.3px">2023–03–07T10:09:26.493Z <span class="k">*</span>          Web Scraper is running in DEVELOPMENT MODE!          <span class="k">*</span></div>
<div style="position:absolute;left:46.5px;top:1559.16px;font-family:'Liberation Mono', monospace;font-size:25.56px;font-weight:400;color:#a9a5a2;letter-spacing:0px;line-height:normal;white-space:pre;-webkit-text-stroke:0.55px;transform:scaleY(1.16);transform-origin:0 21.3px">2023–03–07T10:09:26.493Z <span class="k">*</span>       Concurrency is limited, sessionPool is not available,   <span class="k">*</span></div>
<div style="position:absolute;left:46.5px;top:1588.23px;font-family:'Liberation Mono', monospace;font-size:25.56px;font-weight:400;color:#a9a5a2;letter-spacing:0px;line-height:normal;white-space:pre;-webkit-text-stroke:0.55px;transform:scaleY(1.16);transform-origin:0 21.3px">2023–03–07T10:09:26.494Z <span class="k">*</span>       timeouts are increased and debugger is enabled.         <span class="k">*</span></div>
<div style="position:absolute;left:46.5px;top:1617.30px;font-family:'Liberation Mono', monospace;font-size:25.56px;font-weight:400;color:#a9a5a2;letter-spacing:0px;line-height:normal;white-space:pre;-webkit-text-stroke:0.55px;transform:scaleY(1.16);transform-origin:0 21.3px">2023–03–07T10:09:26.494Z <span class="k">*</span>       If you want full control and performance switch         <span class="k">*</span></div>
<div style="position:absolute;left:46.5px;top:1646.37px;font-family:'Liberation Mono', monospace;font-size:25.56px;font-weight:400;color:#a9a5a2;letter-spacing:0px;line-height:normal;white-space:pre;-webkit-text-stroke:0.55px;transform:scaleY(1.16);transform-origin:0 21.3px">2023–03–07T10:09:26.495Z <span class="k">*</span>                    Run type to PRODUCTION!                    <span class="k">*</span></div>
<div style="position:absolute;left:46.5px;top:1675.44px;font-family:'Liberation Mono', monospace;font-size:25.56px;font-weight:400;color:#a9a5a2;letter-spacing:0px;line-height:normal;white-space:pre;-webkit-text-stroke:0.55px;transform:scaleY(1.16);transform-origin:0 21.3px">2023–03–07T10:09:26.495Z <span class="k">*</span><span class="k">*</span><span class="k">*</span><span class="k">*</span><span class="k">*</span><span class="k">*</span><span class="k">*</span><span class="k">*</span><span class="k">*</span><span class="k">*</span><span class="k">*</span><span class="k">*</span><span class="k">*</span><span class="k">*</span><span class="k">*</span><span class="k">*</span><span class="k">*</span><span class="k">*</span><span class="k">*</span><span class="k">*</span><span class="k">*</span><span class="k">*</span><span class="k">*</span><span class="k">*</span><span class="k">*</span><span class="k">*</span><span class="k">*</span><span class="k">*</span><span class="k">*</span><span class="k">*</span><span class="k">*</span><span class="k">*</span><span class="k">*</span><span class="k">*</span><span class="k">*</span><span class="k">*</span><span class="k">*</span><span class="k">*</span><span class="k">*</span><span class="k">*</span><span class="k">*</span><span class="k">*</span><span class="k">*</span><span class="k">*</span><span class="k">*</span><span class="k">*</span><span class="k">*</span><span class="k">*</span><span class="k">*</span><span class="k">*</span><span class="k">*</span><span class="k">*</span><span class="k">*</span><span class="k">*</span><span class="k">*</span><span class="k">*</span><span class="k">*</span><span class="k">*</span><span class="k">*</span><span class="k">*</span><span class="k">*</span><span class="k">*</span><span class="k">*</span><span class="k">*</span><span class="k">*</span></div>
<div style="position:absolute;left:46.5px;top:1704.51px;font-family:'Liberation Mono', monospace;font-size:25.56px;font-weight:400;color:#a9a5a2;letter-spacing:0px;line-height:normal;white-space:pre;-webkit-text-stroke:0.55px;transform:scaleY(1.16);transform-origin:0 21.3px">2023–03–07T10:09:26.495Z </div>
<div style="position:absolute;left:46.5px;top:1733.58px;font-family:'Liberation Mono', monospace;font-size:25.56px;font-weight:400;color:#a9a5a2;letter-spacing:0px;line-height:normal;white-space:pre;-webkit-text-stroke:0.55px;transform:scaleY(1.16);transform-origin:0 21.3px">2023–03–07T10:09:26.496Z <span style="color:#00ab55">INFO</span>  Configuration completed. Starting the scrape.</div>
<div style="position:absolute;left:46.5px;top:1762.65px;font-family:'Liberation Mono', monospace;font-size:25.56px;font-weight:400;color:#a9a5a2;letter-spacing:0px;line-height:normal;white-space:pre;-webkit-text-stroke:0.55px;transform:scaleY(1.16);transform-origin:0 21.3px">2023–03–07T10:09:26.581Z <span style="color:#00ab55">INFO</span>  <span style="color:#f7ea00">PuppeteerCrawler:</span> Starting the crawl</div>
<div style="position:absolute;left:46.5px;top:1791.72px;font-family:'Liberation Mono', monospace;font-size:25.56px;font-weight:400;color:#a9a5a2;letter-spacing:0px;line-height:normal;white-space:pre;-webkit-text-stroke:0.55px;transform:scaleY(1.16);transform-origin:0 21.3px">2023–03–07T10:09:28.171Z devtools–server starting.</div>
<div style="position:absolute;left:46.5px;top:1820.79px;font-family:'Liberation Mono', monospace;font-size:25.56px;font-weight:400;color:#a9a5a2;letter-spacing:0px;line-height:normal;white-space:pre;-webkit-text-stroke:0.55px;transform:scaleY(1.16);transform-origin:0 21.3px">2023–03–07T10:09:28.172Z devtools–server listening on port: 4321</div>
<div style="position:absolute;left:46.5px;top:1849.86px;font-family:'Liberation Mono', monospace;font-size:25.56px;font-weight:400;color:#a9a5a2;letter-spacing:0px;line-height:normal;white-space:pre;-webkit-text-stroke:0.55px;transform:scaleY(1.16);transform-origin:0 21.3px">2023–03–07T10:09:30.448Z <span style="color:#00ab55">INFO</span>  URL: https://crawlee.dev, TITLE: Crawlee · Build reliable crawlers. Fast. | Crawlee</div>
<div style="position:absolute;left:46.5px;top:1878.93px;font-family:'Liberation Mono', monospace;font-size:25.56px;font-weight:400;color:#a9a5a2;letter-spacing:0px;line-height:normal;white-space:pre;-webkit-text-stroke:0.55px;transform:scaleY(1.16);transform-origin:0 21.3px">2023–03–07T10:09:31.847Z <span style="color:#00ab55">INFO</span>  URL: http://www.example.com, TITLE: Example Domain</div>
<div style="position:absolute;left:46.5px;top:1908.00px;font-family:'Liberation Mono', monospace;font-size:25.56px;font-weight:400;color:#a9a5a2;letter-spacing:0px;line-height:normal;white-space:pre;-webkit-text-stroke:0.55px;transform:scaleY(1.16);transform-origin:0 21.3px">2023–03–07T10:09:33.782Z <span style="color:#00ab55">INFO</span>  URL: https://crawlee.dev/docs/quick–start, TITLE: Quick Start | Crawlee</div>
<div style="position:absolute;left:46.5px;top:1937.07px;font-family:'Liberation Mono', monospace;font-size:25.56px;font-weight:400;color:#a9a5a2;letter-spacing:0px;line-height:normal;white-space:pre;-webkit-text-stroke:0.55px;transform:scaleY(1.16);transform-origin:0 21.3px">2023–03–07T10:09:36.211Z <span style="color:#00ab55">INFO</span>  URL: https://crawlee.dev/docs/examples, TITLE: Examples | Crawlee</div>
<div style="position:absolute;left:46.5px;top:1966.14px;font-family:'Liberation Mono', monospace;font-size:25.56px;font-weight:400;color:#a9a5a2;letter-spacing:0px;line-height:normal;white-space:pre;-webkit-text-stroke:0.55px;transform:scaleY(1.16);transform-origin:0 21.3px">2023–03–07T10:09:38.599Z <span style="color:#00ab55">INFO</span>  URL: https://crawlee.dev/api/core, TITLE: @crawlee/core | API | Crawlee</div>
<div style="position:absolute;left:46.5px;top:1995.21px;font-family:'Liberation Mono', monospace;font-size:25.56px;font-weight:400;color:#a9a5a2;letter-spacing:0px;line-height:normal;white-space:pre;-webkit-text-stroke:0.55px;transform:scaleY(1.16);transform-origin:0 21.3px">2023–03–07T10:09:41.939Z <span style="color:#00ab55">INFO</span>  URL: https://crawlee.dev/docs/introduction, TITLE: Introduction | Crawlee</div>
<div style="position:absolute;left:46.5px;top:2024.28px;font-family:'Liberation Mono', monospace;font-size:25.56px;font-weight:400;color:#a9a5a2;letter-spacing:0px;line-height:normal;white-space:pre;-webkit-text-stroke:0.55px;transform:scaleY(1.16);transform-origin:0 21.3px">2023–03–07T10:09:44.324Z <span style="color:#00ab55">INFO</span>  URL: https://crawlee.dev/docs/guides, TITLE: Guides | Crawlee</div></body></html>
